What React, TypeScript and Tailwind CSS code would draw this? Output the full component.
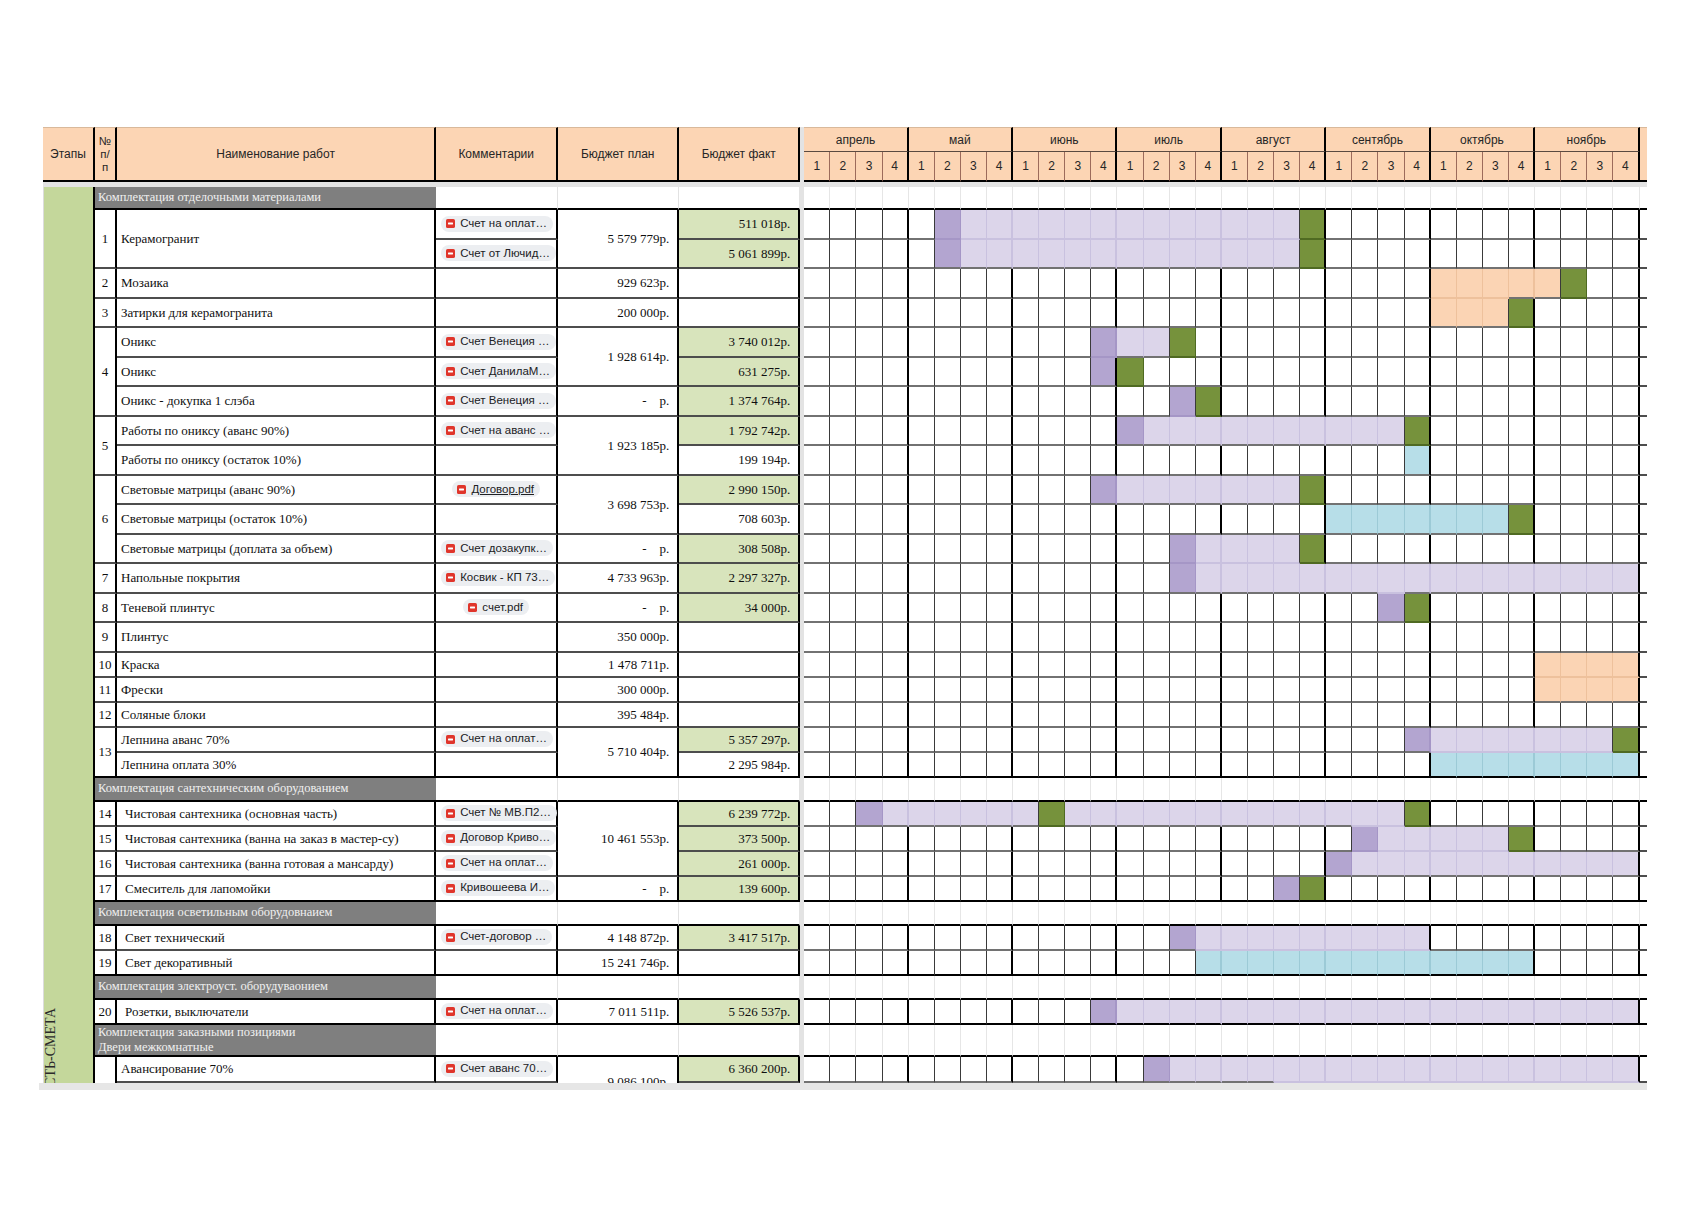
import React from 'react';

type Kind = '.' | 'l' | 'd' | 'g' | 'b' | 'o';

interface Chip {
  text: string;
  center?: boolean;
  link?: boolean;
}

interface Section {
  kind: 'section';
  title: string[];
  h: string;
}

interface Item {
  kind: 'item';
  h: string;
  num: string | null;
  numSpan?: number;
  name: string | null;
  nameSpan?: number;
  indent?: boolean;
  chip?: Chip;
  plan: string | null;
  planSpan?: number;
  fact: string;
  green?: boolean;
  bars: string;
  end?: boolean;
}

type Row = Section | Item;

const H1 = 'h-[29.5px]';
const H2 = 'h-[25px]';
const DASH = '-';

function bars(...segs: [Kind, number, number?][]): string {
  const a: string[] = Array(32).fill('.');
  for (const [k, from, to] of segs) {
    for (let i = from; i <= (to ?? from); i++) a[i] = k;
  }
  return a.join('');
}

const rows: Row[] = [
  { kind: 'section', title: ['Комплектация отделочными материалами'], h: 'h-[23px]' },
  { kind: 'item', h: H1, num: '1', numSpan: 2, name: 'Керамогранит', nameSpan: 2, chip: { text: 'Счет на оплат…' }, plan: '5 579 779р.', planSpan: 2, fact: '511 018р.', green: true, bars: bars(['d', 5], ['l', 6, 18], ['g', 19]) },
  { kind: 'item', h: H1, num: null, name: null, chip: { text: 'Счет от Лючид…' }, plan: null, fact: '5 061 899р.', green: true, bars: bars(['d', 5], ['l', 6, 18], ['g', 19]) },
  { kind: 'item', h: H1, num: '2', name: 'Мозаика', plan: '929 623р.', fact: '', bars: bars(['o', 24, 28], ['g', 29]) },
  { kind: 'item', h: H1, num: '3', name: 'Затирки для керамогранита', plan: '200 000р.', fact: '', bars: bars(['o', 24, 26], ['g', 27]) },
  { kind: 'item', h: H1, num: '4', numSpan: 3, name: 'Оникс', chip: { text: 'Счет Венеция …' }, plan: '1 928 614р.', planSpan: 2, fact: '3 740 012р.', green: true, bars: bars(['d', 11], ['l', 12, 13], ['g', 14]) },
  { kind: 'item', h: H1, num: null, name: 'Оникс', chip: { text: 'Счет ДанилаМ…' }, plan: null, fact: '631 275р.', green: true, bars: bars(['d', 11], ['g', 12]) },
  { kind: 'item', h: H1, num: null, name: 'Оникс - докупка 1 слэба', chip: { text: 'Счет Венеция …' }, plan: DASH, fact: '1 374 764р.', green: true, bars: bars(['d', 14], ['g', 15]) },
  { kind: 'item', h: H1, num: '5', numSpan: 2, name: 'Работы по ониксу (аванс 90%)', chip: { text: 'Счет на аванс …' }, plan: '1 923 185р.', planSpan: 2, fact: '1 792 742р.', green: true, bars: bars(['d', 12], ['l', 13, 22], ['g', 23]) },
  { kind: 'item', h: H1, num: null, name: 'Работы по ониксу (остаток 10%)', plan: null, fact: '199 194р.', bars: bars(['b', 23]) },
  { kind: 'item', h: H1, num: '6', numSpan: 3, name: 'Световые матрицы (аванс 90%)', chip: { text: 'Договор.pdf', center: true, link: true }, plan: '3 698 753р.', planSpan: 2, fact: '2 990 150р.', green: true, bars: bars(['d', 11], ['l', 12, 18], ['g', 19]) },
  { kind: 'item', h: H1, num: null, name: 'Световые матрицы (остаток 10%)', plan: null, fact: '708 603р.', bars: bars(['b', 20, 26], ['g', 27]) },
  { kind: 'item', h: H1, num: null, name: 'Световые матрицы (доплата за объем)', chip: { text: 'Счет дозакупк…' }, plan: DASH, fact: '308 508р.', green: true, bars: bars(['d', 14], ['l', 15, 18], ['g', 19]) },
  { kind: 'item', h: H1, num: '7', name: 'Напольные покрытия', chip: { text: 'Косвик - КП 73…' }, plan: '4 733 963р.', fact: '2 297 327р.', green: true, bars: bars(['d', 14], ['l', 15, 31]) },
  { kind: 'item', h: H1, num: '8', name: 'Теневой плинтус', chip: { text: 'счет.pdf', center: true }, plan: DASH, fact: '34 000р.', green: true, bars: bars(['d', 22], ['g', 23]) },
  { kind: 'item', h: H1, num: '9', name: 'Плинтус', plan: '350 000р.', fact: '', bars: bars() },
  { kind: 'item', h: H2, num: '10', name: 'Краска', plan: '1 478 711р.', fact: '', bars: bars(['o', 28, 31]) },
  { kind: 'item', h: H2, num: '11', name: 'Фрески', plan: '300 000р.', fact: '', bars: bars(['o', 28, 31]) },
  { kind: 'item', h: H2, num: '12', name: 'Соляные блоки', plan: '395 484р.', fact: '', bars: bars() },
  { kind: 'item', h: H2, num: '13', numSpan: 2, name: 'Лепнина аванс 70%', chip: { text: 'Счет на оплат…' }, plan: '5 710 404р.', planSpan: 2, fact: '5 357 297р.', green: true, bars: bars(['d', 23], ['l', 24, 30], ['g', 31]) },
  { kind: 'item', h: H2, num: null, name: 'Лепнина оплата 30%', plan: null, fact: '2 295 984р.', bars: bars(['b', 24, 31]), end: true },
  { kind: 'section', title: ['Комплектация сантехническим оборудованием'], h: 'h-[24px]' },
  { kind: 'item', h: H2, num: '14', name: 'Чистовая сантехника (основная часть)', indent: true, chip: { text: 'Счет № МВ.П2…' }, plan: '10 461 553р.', planSpan: 3, fact: '6 239 772р.', green: true, bars: bars(['d', 2], ['l', 3, 8], ['g', 9], ['l', 10, 22], ['g', 23]) },
  { kind: 'item', h: H2, num: '15', name: 'Чистовая сантехника (ванна на заказ в мастер-су)', indent: true, chip: { text: 'Договор Криво…' }, plan: null, fact: '373 500р.', green: true, bars: bars(['d', 21], ['l', 22, 26], ['g', 27]) },
  { kind: 'item', h: H2, num: '16', name: 'Чистовая сантехника (ванна готовая а мансарду)', indent: true, chip: { text: 'Счет на оплат…' }, plan: null, fact: '261 000р.', green: true, bars: bars(['d', 20], ['l', 21, 31]) },
  { kind: 'item', h: H2, num: '17', name: 'Смеситель для лапомойки', indent: true, chip: { text: 'Кривошеева И…' }, plan: DASH, fact: '139 600р.', green: true, bars: bars(['d', 18], ['g', 19]), end: true },
  { kind: 'section', title: ['Комплектация осветильным оборудовнаием'], h: 'h-[24px]' },
  { kind: 'item', h: H2, num: '18', name: 'Свет технический', indent: true, chip: { text: 'Счет-договор …' }, plan: '4 148 872р.', fact: '3 417 517р.', green: true, bars: bars(['d', 14], ['l', 15, 23]) },
  { kind: 'item', h: H2, num: '19', name: 'Свет декоративный', indent: true, plan: '15 241 746р.', fact: '', bars: bars(['b', 15, 27]), end: true },
  { kind: 'section', title: ['Комплектация электроуст. оборудуваонием'], h: 'h-[24px]' },
  { kind: 'item', h: H2, num: '20', name: 'Розетки, выключатели', indent: true, chip: { text: 'Счет на оплат…' }, plan: '7 011 511р.', fact: '5 526 537р.', green: true, bars: bars(['d', 11], ['l', 12, 31]), end: true },
  { kind: 'section', title: ['Комплектация заказными позициями', 'Двери межкомнатные'], h: 'h-[32px]' },
  { kind: 'item', h: 'h-[26px]', num: '', numSpan: 2, name: 'Авансирование 70%', chip: { text: 'Счет аванс 70…' }, plan: '9 086 100р.', planSpan: 2, fact: '6 360 200р.', green: true, bars: bars(['d', 13], ['l', 14, 31]) },
  { kind: 'item', h: 'h-[26px]', num: null, name: 'Оплата 30%', plan: null, fact: '2 726 100р.', bars: bars(['b', 18, 31]), end: true },
];

const months = ['апрель', 'май', 'июнь', 'июль', 'август', 'сентябрь', 'октябрь', 'ноябрь'];

const BG: Record<Kind, string> = {
  '.': 'bg-white',
  l: 'bg-[#dcd5ea]',
  d: 'bg-[#b3a5d0]',
  g: 'bg-[#76923c]',
  b: 'bg-[#b7dee8]',
  o: 'bg-[#fbd4b4]',
};

const TINT_R: Record<Kind, string> = {
  '.': 'border-r-[#3a3a3a]',
  l: 'border-r-[#c9c1df]',
  d: 'border-r-[#a596c6]',
  g: 'border-r-[#4f6a22]',
  b: 'border-r-[#9ccad6]',
  o: 'border-r-[#eec19c]',
};

const TINT_B: Record<Kind, string> = {
  '.': 'border-b-[#727272]',
  l: 'border-b-[#c9c1df]',
  d: 'border-b-[#a596c6]',
  g: 'border-b-[#4f6a22]',
  b: 'border-b-[#9ccad6]',
  o: 'border-b-[#eec19c]',
};

const soft = (k: Kind) => k !== '.' && k !== 'g';

function ganttCell(k: Kind, r: Kind, b: Kind, col: number, end: boolean): string {
  const monthEnd = col % 4 === 3;
  let right: string;
  if (soft(k) && soft(r)) right = (monthEnd ? 'border-r-2 ' : 'border-r ') + TINT_R[k];
  else if (monthEnd) right = 'border-r-2 border-r-black';
  else if (k === 'g') right = 'border-r border-r-[#4f6a22]';
  else right = 'border-r border-r-[#3a3a3a]';

  let bottom: string;
  if (end) bottom = 'border-b-black';
  else if (soft(k) && soft(b)) bottom = TINT_B[k];
  else if (k === 'g') bottom = 'border-b-[#4f6a22]';
  else bottom = 'border-b-[#727272]';

  return `${BG[k]} ${right} border-b-2 ${bottom}`;
}

function PdfIcon() {
  return (
    <svg width="9" height="9" viewBox="0 0 9 9" className="shrink-0">
      <rect width="9" height="9" rx="1.6" fill="#e0352b" />
      <rect x="2" y="3.6" width="5" height="1.8" rx="0.4" fill="#fff" />
    </svg>
  );
}

function ChipTag({ chip }: { chip: Chip }) {
  return (
    <span className="inline-flex h-[16px] items-center gap-[5px] whitespace-nowrap rounded-full bg-[#eceef1] pl-[5px] pr-[6px] font-['Liberation_Sans',Arial,sans-serif] text-[11.5px] leading-none text-[#202124]">
      <PdfIcon />
      <span className={chip.link ? 'underline' : ''}>{chip.text}</span>
    </span>
  );
}

function Money({ value }: { value: string }) {
  if (value === DASH) {
    return (
      <>
        <span>-</span>
        <span className="ml-[13px]">р.</span>
      </>
    );
  }
  return <>{value}</>;
}

const bottomOf = (end?: boolean) => (end ? 'border-b-black' : 'border-b-[#4d4d4d]');

export default function App() {
  const spanEnd = (i: number, span = 1) => {
    const r = rows[i + span - 1];
    return r.kind === 'item' ? r.end : true;
  };

  return (
    <div className="min-h-screen bg-white pl-[43px] pt-[127px] font-['Liberation_Serif','Times_New_Roman',serif] text-[#0f0f0f]">
      <div className="h-[956px] w-[1604px] overflow-hidden">
        <table className="w-[1604px] table-fixed border-separate border-spacing-0">
          <colgroup>
            <col className="w-[52px]" />
            <col className="w-[22px]" />
            <col className="w-[319px]" />
            <col className="w-[122px]" />
            <col className="w-[121px]" />
            <col className="w-[121px]" />
            <col className="w-[4px]" />
            {Array.from({ length: 32 }, (_, i) => (
              <col key={i} className="w-[26.1px]" />
            ))}
            <col className="w-[7px]" />
          </colgroup>
          <thead className="font-['Liberation_Sans',Arial,sans-serif] text-[12px] text-[#262626]">
            <tr className="h-[25px]">
              <th rowSpan={2} className="border-r-2 border-b-2 border-t border-r-black border-b-black border-t-[#d9b99b] bg-[#fcd5b4] font-normal">
                Этапы
              </th>
              <th rowSpan={2} className="border-r-2 border-b-2 border-t border-r-black border-b-black border-t-[#d9b99b] bg-[#fcd5b4] text-[11.5px] font-normal leading-[13px]">
                №<br />п/<br />п
              </th>
              <th rowSpan={2} className="border-r-2 border-b-2 border-t border-r-black border-b-black border-t-[#d9b99b] bg-[#fcd5b4] font-normal">
                Наименование работ
              </th>
              <th rowSpan={2} className="border-r-2 border-b-2 border-t border-r-black border-b-black border-t-[#d9b99b] bg-[#fcd5b4] font-normal">
                Комментарии
              </th>
              <th rowSpan={2} className="border-r-2 border-b-2 border-t border-r-black border-b-black border-t-[#d9b99b] bg-[#fcd5b4] font-normal">
                Бюджет план
              </th>
              <th rowSpan={2} className="border-r-2 border-b-2 border-t border-r-black border-b-black border-t-[#d9b99b] bg-[#fcd5b4] font-normal">
                Бюджет факт
              </th>
              <th rowSpan={2} className="bg-[#e3e3e3]" />
              {months.map((m) => (
                <th key={m} colSpan={4} className="border-r-2 border-b border-t border-r-black border-b-[#5a4a40] border-t-[#d9b99b] bg-[#fcd5b4] font-normal">
                  {m}
                </th>
              ))}
              <th rowSpan={2} className="border-b-2 border-t border-b-black border-t-[#d9b99b] bg-[#fcd5b4]" />
            </tr>
            <tr className="h-[30px]">
              {months.map((m) =>
                [1, 2, 3, 4].map((w) => (
                  <th
                    key={m + w}
                    className={
                      w === 4
                        ? 'border-r-2 border-b-2 border-r-black border-b-black bg-[#fcd5b4] font-normal'
                        : 'border-r border-b-2 border-r-[#9c6b5b] border-b-black bg-[#fcd5b4] font-normal'
                    }
                  >
                    {w}
                  </th>
                ))
              )}
            </tr>
          </thead>
          <tbody className="text-[13px]">
            <tr className="h-[5px]">
              <td colSpan={40} className="bg-[#e3e3e3]" />
            </tr>
            {rows.map((row, i) => {
              const first = i === 0 && (
                <td rowSpan={rows.length} className="border-r-2 border-l border-r-black border-l-[#dcdcdc] bg-[#c4d79b] align-bottom">
                  <div className="mx-auto w-fit rotate-180 pt-[3px] text-[14px] leading-none text-[#2a2a2a] [writing-mode:vertical-rl]">
                    ЧАСТЬ-СМЕТА
                  </div>
                </td>
              );
              const divider = i === 0 && <td rowSpan={rows.length} className="bg-[#e3e3e3]" />;

              if (row.kind === 'section') {
                return (
                  <tr key={i} className={row.h}>
                    {first}
                    <td colSpan={2} className="whitespace-nowrap border-b-2 border-b-black bg-[#7f7f7f] pl-[3px] text-[12.5px] leading-[15px] text-[#f0f0f0]">
                      {row.title.map((t) => (
                        <div key={t}>{t}</div>
                      ))}
                    </td>
                    <td className="border-r border-b-2 border-r-[#e2e2e2] border-b-black" />
                    <td className="border-r border-b-2 border-r-[#e2e2e2] border-b-black" />
                    <td className="border-r border-b-2 border-r-[#e2e2e2] border-b-black" />
                    {divider}
                    {Array.from({ length: 32 }, (_, c) => (
                      <td key={c} className="border-r border-b-2 border-r-[#e6e6e6] border-b-black" />
                    ))}
                    <td className="border-b-2 border-b-black" />
                  </tr>
                );
              }

              const next = rows[i + 1];
              const below = next && next.kind === 'item' ? next.bars : '';
              const rowBottom = bottomOf(row.end);

              return (
                <tr key={i} className={row.h}>
                  {first}
                  {row.num !== null && (
                    <td rowSpan={row.numSpan ?? 1} className={`border-r-2 border-b-2 border-r-black text-center leading-none ${bottomOf(spanEnd(i, row.numSpan))}`}>
                      {row.num}
                    </td>
                  )}
                  {row.name !== null && (
                    <td
                      rowSpan={row.nameSpan ?? 1}
                      className={`whitespace-nowrap border-r-2 border-b-2 border-r-black leading-none ${row.indent ? 'pl-[8px]' : 'pl-[4px]'} ${bottomOf(spanEnd(i, row.nameSpan))}`}
                    >
                      {row.name}
                    </td>
                  )}
                  <td className={`border-r-2 border-b-2 border-r-black leading-none ${rowBottom}`}>
                    {row.chip && (
                      <div className={row.chip.center ? 'flex justify-center' : 'flex pl-[5px]'}>
                        <ChipTag chip={row.chip} />
                      </div>
                    )}
                  </td>
                  {row.plan !== null && (
                    <td rowSpan={row.planSpan ?? 1} className={`whitespace-nowrap border-r-2 border-b-2 border-r-black pr-[8px] text-right leading-none ${bottomOf(spanEnd(i, row.planSpan))}`}>
                      <Money value={row.plan} />
                    </td>
                  )}
                  <td className={`whitespace-nowrap border-r-2 border-b-2 border-r-black pr-[8px] text-right leading-none ${row.green ? 'bg-[#d8e4bc]' : 'bg-white'} ${rowBottom}`}>
                    {row.fact}
                  </td>
                  {divider}
                  {Array.from({ length: 32 }, (_, c) => (
                    <td
                      key={c}
                      className={ganttCell(
                        row.bars[c] as Kind,
                        (row.bars[c + 1] ?? '.') as Kind,
                        (below[c] ?? '.') as Kind,
                        c,
                        !!row.end
                      )}
                    />
                  ))}
                  <td className={`border-b-2 ${rowBottom}`} />
                </tr>
              );
            })}
          </tbody>
        </table>
      </div>
      <div className="-ml-[4px] h-[7px] w-[1608px] bg-[#e6e6e6]" />
    </div>
  );
}
